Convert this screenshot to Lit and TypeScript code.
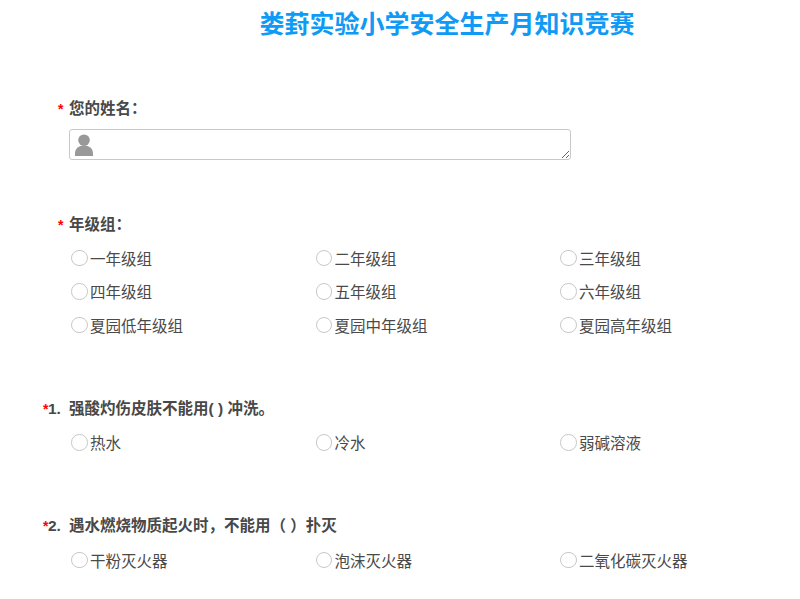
import { LitElement, html, css } from "lit";
import { customElement } from "lit/decorators.js";

const FIELDS = [
  { cls: "named", num: "", label: "您的姓名：", input: true, options: [] as string[] },
  { cls: "named grade", num: "", label: "年级组：", options: ["一年级组", "二年级组", "三年级组", "四年级组", "五年级组", "六年级组", "夏园低年级组", "夏园中年级组", "夏园高年级组"] },
  { cls: "q q1", num: "1.", label: "强酸灼伤皮肤不能用( ) 冲洗。", options: ["热水", "冷水", "弱碱溶液"] },
  { cls: "q q2", num: "2.", label: "遇水燃烧物质起火时，不能用（ ）扑灭", options: ["干粉灭火器", "泡沫灭火器", "二氧化碳灭火器"] },
];

@customElement("app-root")
export class AppRoot extends LitElement {
  static styles = css`
    :host {
      display: block;
      width: 800px;
      height: 599px;
      overflow: hidden;
      background: #fff;
      font-family: "Liberation Sans", "Noto Sans CJK SC", sans-serif;
      color: #484848;
    }
    h1 {
      margin: 0;
      padding: 9px 0 0 259.5px;
      height: 91px;
      box-sizing: border-box;
      font-size: 25px;
      line-height: 30px;
      font-weight: 700;
      color: #0f9bf5;
      white-space: nowrap;
    }
    .field { display: flex; flex-direction: column; }
    .named { padding-left: 58px; }
    .grade { margin-top: 47px; }
    .q { padding-left: 43px; }
    .q1 { margin-top: 49px; }
    .q2 { margin-top: 49px; }
    .label {
      display: flex;
      align-items: baseline;
      height: 34px;
      line-height: 35px;
      font-size: 15.5px;
      font-weight: 700;
      white-space: pre;
    }
    .star { color: #f00; font-size: 14px; }
    .named .star { width: 11px; }
    .q .star { width: 5px; }
    .num { width: 21px; }
    .input-wrap {
      margin: 4px 0 0 10.5px;
      width: 502.5px;
      height: 31px;
      box-sizing: border-box;
      border: 1px solid #c9c9c9;
      border-radius: 3px;
      display: flex;
      overflow: hidden;
      resize: both;
      align-items: flex-start;
      background: #fff;
    }
    .input-wrap svg { width: 20px; height: 22px; margin: 4px 0 0 4px; flex: none; fill: #999; }
    .grid {
      display: grid;
      grid-template-columns: repeat(3, 244.5px);
      grid-auto-rows: 33.5px;
    }
    .q .grid { margin-top: 1px; }
    .named .grid { padding-left: 13px; }
    .q .grid { padding-left: 28px; }
    .opt {
      display: flex;
      align-items: center;
      gap: 2.5px;
      font-size: 15.5px;
      white-space: nowrap;
      color: #4a4a4a;
    }
    .dot {
      width: 16.5px;
      height: 16.5px;
      box-sizing: border-box;
      border: 1px solid #c8c8c8;
      border-radius: 50%;
      background: #fff;
      flex: none;
    }
  `;

  render() {
    return html`
      <h1>娄葑实验小学安全生产月知识竞赛</h1>
      ${FIELDS.map(
        (f) => html`
          <section class="field ${f.cls}">
            <div class="label"><span class="star">*</span>${f.num ? html`<span class="num">${f.num}</span>` : ""}<span>${f.label}</span></div>
            ${f.input
              ? html`<div class="input-wrap">
                  <svg viewBox="0 0 20 22">
                    <circle cx="10" cy="6.2" r="5.8"></circle>
                    <path d="M1 22v-2.5C1 14.5 5 11.6 10 11.6s9 2.9 9 7.9V22z"></path>
                  </svg>
                </div>`
              : html`<div class="grid">
                  ${f.options.map((o) => html`<div class="opt"><span class="dot"></span>${o}</div>`)}
                </div>`}
          </section>
        `
      )}
    `;
  }
}
